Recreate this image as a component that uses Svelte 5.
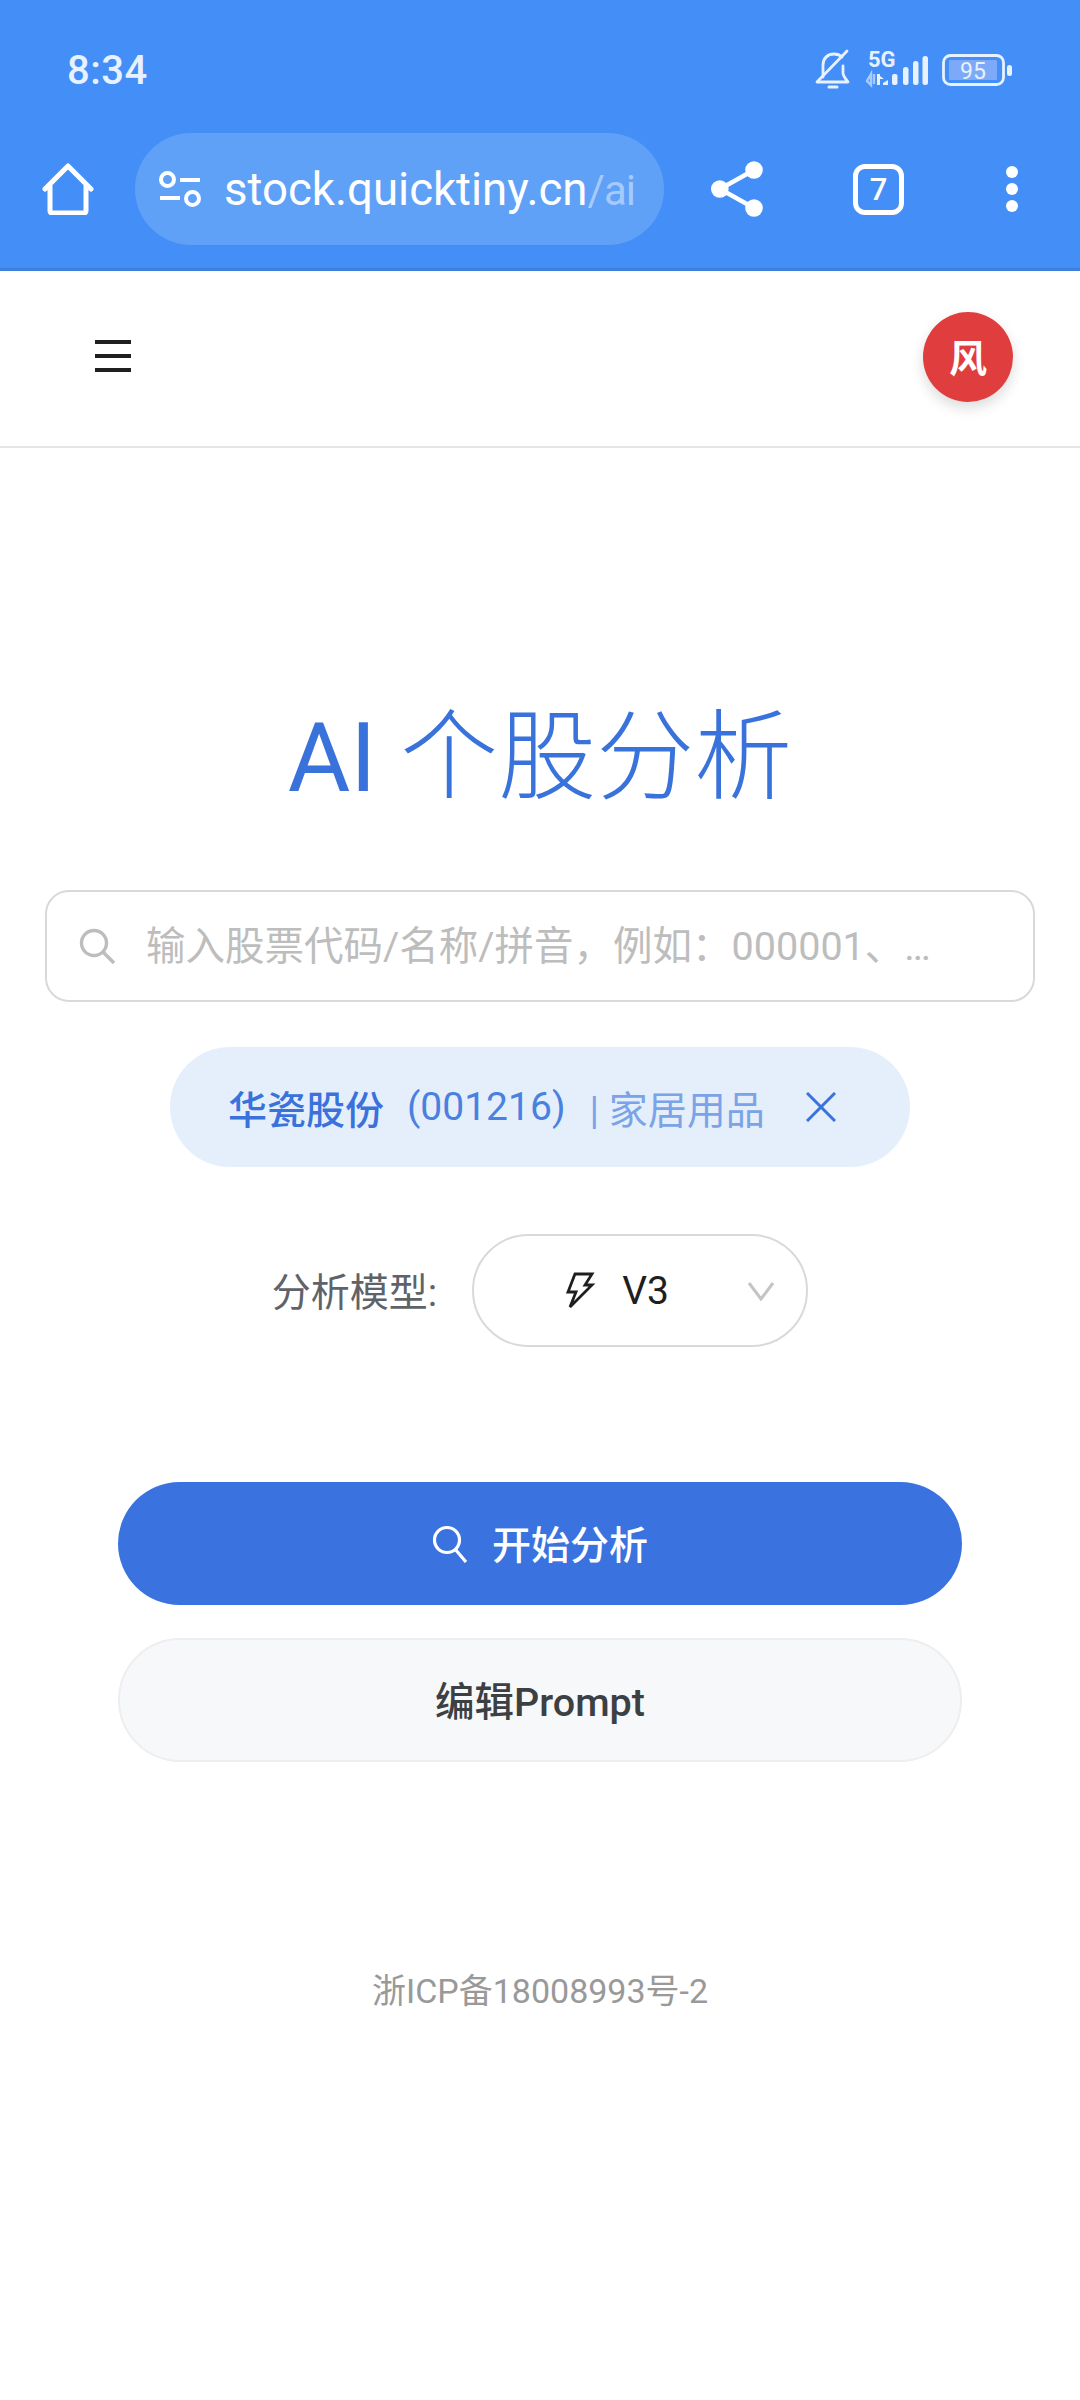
<script>
	let query = $state('');
</script>

<div class="page">
	<header class="browser">
		<div class="status">
			<span class="time">8:34</span>
			<div class="status-icons">
				<svg class="bell" viewBox="0 0 36 42" fill="none" stroke="#e8f1fe" stroke-width="2.8" stroke-linecap="round" stroke-linejoin="round">
					<path d="M8 28V16C8 9 13 5 19 5c3 0 6 1 8 3" />
					<path d="M28 17v7c0 3 2 5 5 9H3" />
					<path d="M2 33 32 2" />
					<path d="M14 38h8" stroke-width="3" />
				</svg>
				<svg class="signal" viewBox="0 0 63 40">
					<text x="3" y="17" class="fiveg">5G</text>
					<path d="M6 24v11l-4-4zM9 24v10" fill="none" stroke="#a9cbfb" stroke-width="2.4" />
					<path d="M12 24h3v11h-3zM15 26l4 3h-4z" fill="#e8f1fe" />
					<path d="M18 35v-2l5-3v5z" fill="#e8f1fe" />
					<rect x="27" y="24" width="5.5" height="11" rx="2" fill="#e8f1fe" />
					<rect x="38" y="17" width="5.5" height="18" rx="2.5" fill="#e8f1fe" />
					<rect x="48" y="11" width="5.5" height="24" rx="2.5" fill="#e8f1fe" />
					<rect x="57.5" y="6" width="5.5" height="29" rx="2.5" fill="#e8f1fe" />
				</svg>
				<svg class="battery" viewBox="0 0 70 32">
					<rect x="1.5" y="1.5" width="60" height="29" rx="7" fill="none" stroke="#e8f1fe" stroke-width="2.8" />
					<rect x="7" y="6" width="48" height="20" rx="1" fill="#7daaf8" />
					<text x="31" y="24.5" text-anchor="middle" class="level">95</text>
					<rect x="65" y="11" width="5" height="11" rx="2.5" fill="#e8f1fe" />
				</svg>
			</div>
		</div>
		<div class="toolbar">
			<svg class="home" viewBox="0 0 52 52" fill="none" stroke="#fff" stroke-width="5" stroke-linecap="round" stroke-linejoin="round">
				<path d="M3 26 26 3l23 23" />
				<path d="M8 23v25a2 2 0 0 0 2 2h32a2 2 0 0 0 2-2V23" />
			</svg>
			<div class="url">
				<svg class="tune" viewBox="0 0 43 36" fill="none" stroke="#fff" stroke-width="4">
					<circle cx="8.5" cy="8.5" r="6.5" />
					<path d="M21 9h20M1 27h20" />
					<circle cx="33.5" cy="27.5" r="6.5" />
				</svg>
				<span class="address">stock.quicktiny.cn<span class="path">/ai</span></span>
			</div>
			<svg class="share" viewBox="0 0 52 56" fill="none">
				<path d="M43 9 9 28l34 19" stroke="#fff" stroke-width="4.5" />
				<circle cx="43" cy="9" r="8.8" fill="#fff" />
				<circle cx="8.8" cy="28" r="8.8" fill="#fff" />
				<circle cx="43" cy="47" r="8.8" fill="#fff" />
			</svg>
			<div class="tabs">7</div>
			<div class="more"><i></i><i></i><i></i></div>
		</div>
	</header>

	<nav class="nav">
		<div class="burger"><i></i><i></i><i></i></div>
		<div class="avatar">风</div>
	</nav>

	<main class="main">
		<h1 class="title"><span class="title-latin">AI</span> 个股分析</h1>

		<label class="search">
			<svg class="search-icon" viewBox="0 0 36 36" fill="none" stroke="#bdbdbd" stroke-width="3.4">
				<circle cx="15" cy="15" r="12.5" />
				<path d="m24 24 11 11" />
			</svg>
			<input bind:value={query} placeholder="输入股票代码/名称/拼音，例如：000001、平安银行" />
		</label>

		<div class="chip">
			<span class="chip-name">华瓷股份</span>
			<span class="chip-code">(001216)</span>
			<span class="chip-sector">| 家居用品</span>
			<svg class="chip-close" viewBox="0 0 30 30" stroke="#3a72dc" stroke-width="3" fill="none">
				<path d="m1 1 28 28M29 1 1 29" />
			</svg>
		</div>

		<div class="model">
			<span class="model-label">分析模型:</span>
			<div class="select">
				<svg class="zap" viewBox="0 0 28 38" fill="none" stroke="#1f1f1f" stroke-width="2.8" stroke-linejoin="miter">
					<path d="M9 2h17l-7 11h7L4 35l6-15H2z" />
				</svg>
				<span class="select-value">V3</span>
				<svg class="chevron" viewBox="0 0 28 20" fill="none" stroke="#c4c4c4" stroke-width="3">
					<path d="m2 2 12 16L26 2" />
				</svg>
			</div>
		</div>

		<button class="btn primary">
			<svg class="btn-icon" viewBox="0 0 36 38" fill="none" stroke="#fff" stroke-width="3.2">
				<circle cx="15" cy="15" r="12.5" />
				<path d="m23 24 11 13" />
			</svg>
			<span class="btn-label">开始分析</span>
		</button>
		<button class="btn secondary"><span class="btn-label">编辑Prompt</span></button>

		<footer class="icp">浙ICP备18008993号-2</footer>
	</main>
</div>

<style>
	:global(body) {
		margin: 0;
		background: #fff;
	}

	.page {
		width: 1080px;
		min-height: 2400px;
		background: #fff;
		font-family: Roboto, 'Noto Sans CJK SC', sans-serif;
	}

	.browser {
		height: 271px;
		box-sizing: border-box;
		background: #448ef7;
		border-bottom: 3px solid #3f80dc;
	}

	.status {
		height: 122px;
		box-sizing: border-box;
		padding: 18px 68px 0 67px;
		display: flex;
		align-items: center;
		justify-content: space-between;
	}

	.time {
		font-size: 40px;
		font-weight: 500;
		color: #e8f1fe;
		letter-spacing: 0.5px;
	}

	.status-icons {
		display: flex;
		align-items: center;
	}

	.bell {
		width: 36px;
		height: 42px;
		margin-right: 14px;
	}

	.signal {
		width: 63px;
		height: 40px;
		margin-right: 14px;
	}

	.fiveg {
		font-family: Roboto, sans-serif;
		font-size: 22px;
		font-weight: 700;
		fill: #e8f1fe;
	}

	.battery {
		width: 70px;
		height: 32px;
	}

	.level {
		font-family: Roboto, sans-serif;
		font-size: 23px;
		fill: #e8f1fe;
	}

	.toolbar {
		height: 134px;
		display: flex;
		align-items: center;
		padding-left: 42px;
	}

	.home {
		width: 52px;
		height: 52px;
		flex-shrink: 0;
	}

	.url {
		width: 529px;
		height: 112px;
		margin-left: 41px;
		box-sizing: border-box;
		padding-left: 24px;
		border-radius: 56px;
		background: #60a1f8;
		display: flex;
		align-items: center;
		gap: 22px;
		flex-shrink: 0;
	}

	.tune {
		width: 43px;
		height: 36px;
		flex-shrink: 0;
	}

	.address {
		font-size: 45.6px;
		color: #fff;
		white-space: nowrap;
	}

	.path {
		font-size: 42px;
		letter-spacing: -1px;
		color: rgba(255, 255, 255, 0.45);
	}

	.share {
		width: 52px;
		height: 56px;
		margin-left: 47px;
		flex-shrink: 0;
	}

	.tabs {
		width: 51px;
		height: 51px;
		margin-left: 90px;
		box-sizing: border-box;
		border: 5px solid #fff;
		border-radius: 12px;
		color: #fff;
		font-size: 31px;
		font-weight: 500;
		display: flex;
		align-items: center;
		justify-content: center;
		flex-shrink: 0;
	}

	.more {
		margin-left: 102px;
		display: flex;
		flex-direction: column;
		gap: 5px;
	}

	.more i {
		display: block;
		width: 12px;
		height: 12px;
		border-radius: 50%;
		background: #fff;
	}

	.nav {
		height: 177px;
		box-sizing: border-box;
		border-bottom: 2px solid #e5e5ea;
		padding: 0 67px 3px 95px;
		display: flex;
		align-items: center;
		justify-content: space-between;
	}

	.burger {
		display: flex;
		flex-direction: column;
		gap: 10px;
		margin-bottom: 3px;
	}

	.burger i {
		display: block;
		width: 36px;
		height: 4px;
		background: #1f1f1f;
	}

	.avatar {
		width: 90px;
		height: 90px;
		box-sizing: border-box;
		padding-bottom: 4px;
		border-radius: 50%;
		background: #e03e3e;
		color: #fff;
		font-size: 38px;
		font-weight: 700;
		display: flex;
		align-items: center;
		justify-content: center;
		box-shadow: 0 6px 14px rgba(0, 0, 0, 0.14);
	}

	.main {
		display: flex;
		flex-direction: column;
		align-items: center;
	}

	.title {
		margin: 244px 0 0;
		height: 132px;
		line-height: 132px;
		font-size: 98px;
		font-weight: 300;
		color: #3a72dc;
	}

	.title-latin {
		font-size: 96px;
		font-weight: 400;
	}

	.search {
		width: 990px;
		height: 112px;
		margin-top: 66px;
		box-sizing: border-box;
		border: 2px solid #d9d9d9;
		border-radius: 24px;
		padding: 0 80px 0 32px;
		display: flex;
		align-items: center;
		gap: 31px;
	}

	.search-icon {
		width: 36px;
		height: 36px;
		flex-shrink: 0;
	}

	.search input {
		flex: 1;
		min-width: 0;
		border: 0;
		outline: 0;
		padding: 0;
		background: none;
		font: inherit;
		font-size: 39.5px;
		text-overflow: ellipsis;
	}

	.search input::placeholder {
		color: #bdbdbd;
		opacity: 1;
	}

	.chip {
		width: 740px;
		height: 120px;
		margin-top: 45px;
		box-sizing: border-box;
		padding-left: 58px;
		border-radius: 60px;
		background: #e5effc;
		display: flex;
		align-items: center;
		font-size: 39px;
	}

	.chip-name {
		font-weight: 500;
		color: #3a72dc;
	}

	.chip-code {
		margin-left: 23px;
		color: #4a80e0;
	}

	.chip-sector {
		margin-left: 24px;
		color: #7ba3e8;
	}

	.chip-close {
		width: 30px;
		height: 30px;
		margin-left: 41px;
	}

	.model {
		margin-top: 67px;
		display: flex;
		align-items: center;
		gap: 35px;
	}

	.model-label {
		padding-bottom: 3px;
		font-size: 39px;
		color: #5f6368;
	}

	.select {
		width: 336px;
		height: 113px;
		box-sizing: border-box;
		border: 2px solid #d9d9d9;
		border-radius: 57px;
		padding-left: 90px;
		display: flex;
		align-items: center;
	}

	.zap {
		width: 32px;
		height: 38px;
	}

	.select-value {
		margin-left: 26px;
		font-size: 39px;
		color: #1f1f1f;
	}

	.chevron {
		width: 28px;
		height: 20px;
		margin-left: 78px;
	}

	.btn {
		width: 844px;
		box-sizing: border-box;
		font: inherit;
		font-weight: 500;
		display: flex;
		align-items: center;
		justify-content: center;
		gap: 24px;
	}

	.btn-label {
		padding-bottom: 4px;
	}

	.primary {
		height: 123px;
		margin-top: 135px;
		border: 0;
		border-radius: 62px;
		background: #3a72df;
		color: #fff;
		font-size: 39px;
	}

	.btn-icon {
		width: 36px;
		height: 38px;
	}

	.secondary {
		height: 124px;
		margin-top: 33px;
		border: 2px solid #eeeef0;
		border-radius: 62px;
		background: #f7f8fa;
		color: #3c4043;
		font-size: 39.5px;
	}

	.icp {
		margin-top: 202px;
		font-size: 34px;
		color: #999;
	}
</style>
